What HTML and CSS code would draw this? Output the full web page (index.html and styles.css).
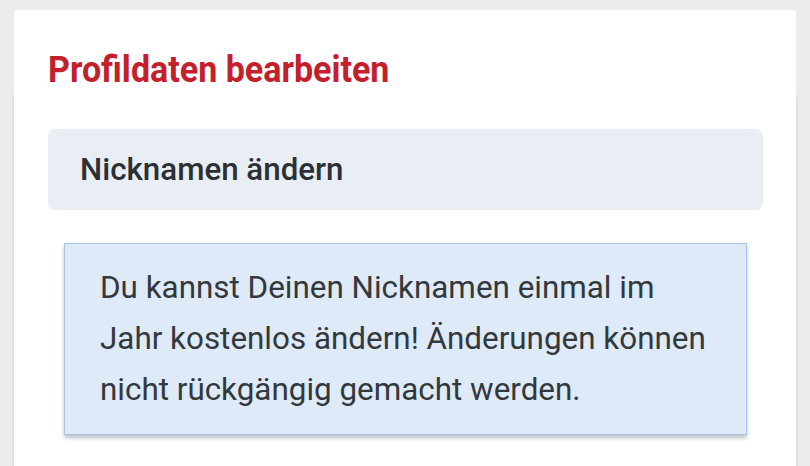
FILE: index.html
```html
<!DOCTYPE html>
<html lang="de">
<head>
<meta charset="utf-8">
<title>Profildaten bearbeiten</title>
<link rel="stylesheet" href="styles.css">
</head>
<body>
<div class="card">
  <div class="card-head">
    <h1 class="title"><span class="title-text">Profildaten bearbeiten</span></h1>
  </div>
  <div class="card-body">
    <div class="section-title">Nicknamen ändern</div>
    <div class="info">Du kannst Deinen Nicknamen einmal im Jahr kostenlos ändern! Änderungen können nicht rückgängig gemacht werden.</div>
  </div>
</div>
</body>
</html>
```

FILE: styles.css
```css
html, body {
  margin: 0;
  padding: 0;
}
body {
  background: #ececec;
  font-family: Roboto, "Noto Sans", sans-serif;
  color: #2f3337;
  overflow: hidden;
}
.card {
  margin: 10px 14px 0 14px;
  background: #fff;
  border-radius: 4px 4px 0 0;
  height: 520px;
}
.card-head {
  padding: 38px 0 3px 34px;
  background: #fff;
  border-radius: 4px 4px 0 0;
  position: relative;
  z-index: 1;
}
.title {
  margin: 0;
  font-size: 37px;
  line-height: 44px;
  font-weight: 700;
  color: #c3202c;
  white-space: nowrap;
}
.title-text {
  display: inline-block;
  transform: scaleX(0.92);
  transform-origin: left center;
}
.card-body {
  padding: 34px 33px 40px 34px;
  box-shadow: -1px 0 3px rgba(0, 0, 0, 0.08), 1px 0 3px rgba(0, 0, 0, 0.08);
  background: #fff;
}
.section-title {
  background: #e8eef3;
  border-radius: 7px;
  height: 81px;
  line-height: 81px;
  padding-left: 32px;
  font-size: 31.3px;
  font-weight: 500;
  color: #2c3034;
}
.info {
  margin: 33px 16px 0 16px;
  background: #deeaf8;
  border: 1px solid #a9c5e3;
  box-shadow: 0 3px 4px rgba(60, 80, 100, 0.35);
  padding: 18px 34px 19px 35px;
  font-size: 31.4px;
  line-height: 51px;
  color: #33383c;
}
```
